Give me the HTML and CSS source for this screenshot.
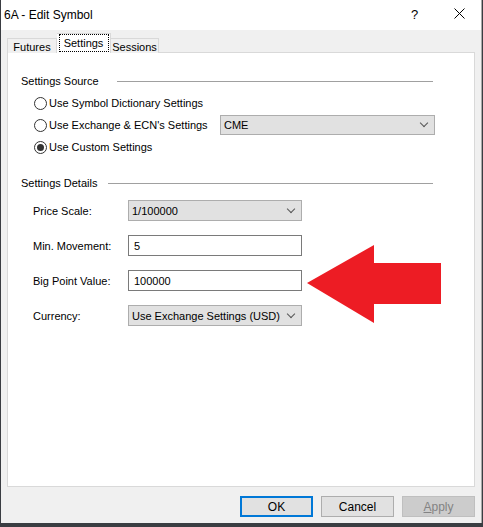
FILE: index.html
```html
<!DOCTYPE html>
<html>
<head>
<meta charset="utf-8">
<link rel="stylesheet" href="styles.css">
</head>
<body>
<div class="window">
  <div class="titlebar">
    <span class="title">6A - Edit Symbol</span>
    <span class="help">?</span>
    <span class="close">
      <svg width="11" height="11" viewBox="0 0 11 11"><path d="M0.5 0.5 L10.5 10.5 M10.5 0.5 L0.5 10.5" stroke="#000" stroke-width="1" fill="none"/></svg>
    </span>
  </div>
  <div class="client">
    <div class="tabs">
      <div class="tab t-futures">Futures</div>
      <div class="tab active"><span class="focus">Settings</span></div>
      <div class="tab t-sessions">Sessions</div>
    </div>
    <div class="panel">
      <div class="group-head first"><span>Settings Source</span><span class="rule"></span></div>
      <div class="radios">
        <div class="radio-row"><span class="radio"></span><span>Use Symbol Dictionary Settings</span></div>
        <div class="radio-row"><span class="radio"></span><span class="radio-label">Use Exchange &amp; ECN's Settings</span>
          <div class="combo cme"><span>CME</span><span class="chev"></span></div>
        </div>
        <div class="radio-row"><span class="radio checked"></span><span>Use Custom Settings</span></div>
      </div>
      <div class="group-head second"><span>Settings Details</span><span class="rule"></span></div>
      <div class="fields">
        <div class="field"><span class="label">Price Scale:</span><div class="combo"><span>1/100000</span><span class="chev"></span></div></div>
        <div class="field"><span class="label">Min. Movement:</span><div class="input">5</div></div>
        <div class="field"><span class="label">Big Point Value:</span><div class="input">100000</div>
          <svg class="arrow" width="136" height="80" viewBox="0 0 136 80"><polygon points="0,38 67,0 67,18 134,18 134,59 67,59 67,78" fill="#ed1c24"/></svg>
        </div>
        <div class="field"><span class="label">Currency:</span><div class="combo"><span>Use Exchange Settings (USD)</span><span class="chev"></span></div></div>
      </div>
    </div>
    <div class="buttons">
      <div class="btn default">OK</div>
      <div class="btn">Cancel</div>
      <div class="btn disabled"><u>A</u>pply</div>
    </div>
  </div>
</div>
</body>
</html>
```
FILE: styles.css
```css
html, body {
  margin: 0;
  padding: 0;
}
body {
  background: #3a3d42;
  width: 483px;
  height: 527px;
  overflow: hidden;
  font-family: "Liberation Sans", Arial, sans-serif;
  font-size: 11px;
  color: #000;
  white-space: nowrap;
}
.window {
  margin-left: 1px;
  width: 481px;
  height: 523px;
  box-sizing: border-box;
  border-right: 1px solid #a9a9a9;
  background: #f0f0f0;
  display: flex;
  flex-direction: column;
}
.titlebar {
  height: 30px;
  background: #fff;
  display: flex;
  align-items: center;
  position: relative;
  padding-left: 3px;
}
.title {
  font-size: 12px;
}
.help {
  position: absolute;
  left: 410px;
  top: 7px;
  font-size: 13px;
}
.close {
  position: absolute;
  left: 453px;
  top: 8px;
  display: flex;
}
.client {
  padding: 3px 0 0 6px;
  display: flex;
  flex-direction: column;
}
.tabs {
  display: flex;
  align-items: flex-end;
  height: 20px;
  position: relative;
  z-index: 2;
}
.tab {
  height: 15px;
  line-height: 16px;
  border: 1px solid #d9d9d9;
  border-bottom: none;
  background: #f0f0f0;
  box-sizing: border-box;
  text-align: center;
}
.t-futures {
  width: 50px;
}
.t-sessions {
  width: 48px;
  border-left: none;
}
.tab.active {
  width: 54px;
  height: 20px;
  line-height: 19px;
  background: #fff;
  border-left: none;
}
.focus {
  display: inline-block;
  outline: 1px dotted #000;
  line-height: 16px;
  width: 48px;
  margin-top: 1px;
}
.panel {
  width: 468px;
  height: 435px;
  box-sizing: border-box;
  background: #fff;
  border: 1px solid #d9d9d9;
  position: relative;
  z-index: 1;
  margin-top: -1px;
  padding-left: 13px;
}
.group-head {
  display: flex;
  align-items: center;
  height: 16px;
  margin-right: 41px;
}
.group-head.first {
  margin-top: 20px;
}
.group-head.second {
  margin-top: 17px;
}
.rule {
  flex: 1;
  height: 1px;
  background: #a0a0a0;
  margin-left: 18px;
  margin-top: 1px;
}
.group-head.second .rule {
  margin-left: 11px;
}
.radios {
  margin-top: 3px;
  padding-left: 13px;
}
.radio-row {
  height: 22px;
  display: flex;
  align-items: center;
}
.radio {
  width: 11px;
  height: 11px;
  border: 1px solid #333;
  border-radius: 50%;
  margin-right: 2px;
  display: flex;
  align-items: center;
  justify-content: center;
  flex: none;
}
.radio.checked::after {
  content: "";
  width: 7px;
  height: 7px;
  border-radius: 50%;
  background: #333;
}
.radio-label {
  width: 171px;
}
.combo {
  height: 21px;
  width: 174px;
  box-sizing: border-box;
  background: #e1e1e1;
  border: 1px solid #adadad;
  display: flex;
  align-items: center;
  justify-content: space-between;
  padding: 0 7px 0 3px;
}
.combo.cme {
  width: 215px;
  height: 20px;
}
.chev {
  width: 5px;
  height: 5px;
  border-right: 1px solid #555;
  border-bottom: 1px solid #555;
  transform: rotate(45deg);
  margin-top: -4px;
}
.fields {
  margin-top: 9px;
  padding-left: 12px;
  display: flex;
  flex-direction: column;
  gap: 14px;
}
.field {
  display: flex;
  align-items: center;
  height: 21px;
  position: relative;
}
.label {
  width: 95px;
}
.input {
  height: 21px;
  width: 174px;
  box-sizing: border-box;
  border: 1px solid #7a7a7a;
  background: #fff;
  display: flex;
  align-items: center;
  padding-left: 5px;
}
.arrow {
  position: absolute;
  left: 274px;
  top: -25px;
}
.buttons {
  display: flex;
  justify-content: flex-end;
  gap: 8px;
  margin-top: 9px;
  padding-right: 6px;
}
.btn {
  width: 73px;
  height: 21px;
  box-sizing: border-box;
  border: 1px solid #adadad;
  background: #e1e1e1;
  display: flex;
  align-items: center;
  justify-content: center;
  font-size: 12px;
}
.btn.default {
  border: 2px solid #0078d7;
}
.btn.disabled {
  background: #cccccc;
  border-color: #bfbfbf;
  color: #838383;
}
```
